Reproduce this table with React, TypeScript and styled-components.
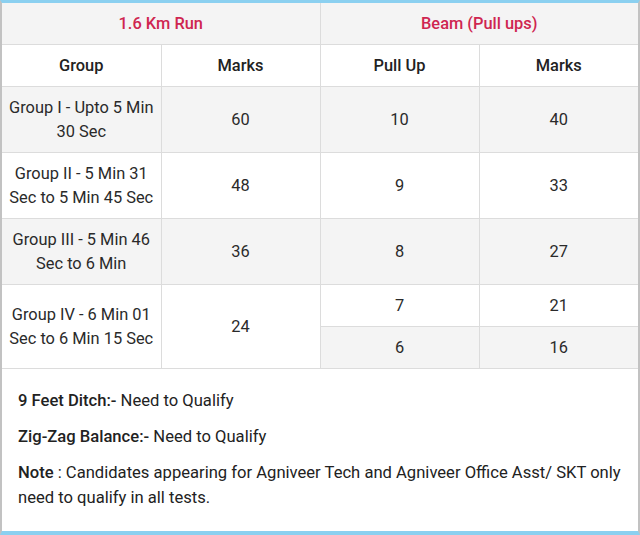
import React from "react";
import styled, { createGlobalStyle } from "styled-components";

const Global = createGlobalStyle`
  html, body { margin: 0; padding: 0; background: #fff; }
  body { font-family: Roboto, "Noto Sans", Arial, sans-serif; color: #222; }
`;

const Frame = styled.div`
  width: 640px;
  height: 535px;
  box-sizing: border-box;
  border-top: 3px solid #8bd0f0;
  border-bottom: 4px solid #8bd0f0;
  border-left: 2px solid #c2c2c2;
  border-right: 2px solid #c2c2c2;
  display: flex;
  flex-direction: column;
`;

const Table = styled.table`
  width: 100%;
  border-collapse: collapse;
  table-layout: fixed;
  font-size: 16.4px;
  line-height: 24px;
`;

const Row = styled.tr<{ $shade?: boolean }>`
  background: ${(p) => (p.$shade ? "#f4f4f4" : "#ffffff")};
`;

const Cell = styled.td<{ $shade?: boolean }>`
  border: 1px solid #dcdcdc;
  padding: 9px 4px 8px;
  text-align: center;
  vertical-align: middle;
  color: #2a2a2a;
  background: ${(p) => (p.$shade === undefined ? "transparent" : p.$shade ? "#f4f4f4" : "#ffffff")};
  &:first-child { border-left: none; }
  &:last-child { border-right: none; }
`;

const Title = styled.th`
  border: 1px solid #dcdcdc;
  border-top: none;
  padding: 9px 6px 8px;
  font-weight: 500;
  color: #cf2550;
  text-align: center;
  &:first-child { border-left: none; }
  &:last-child { border-right: none; }
`;

const Head = styled.th`
  border: 1px solid #dcdcdc;
  padding: 9px 6px 8px;
  font-weight: 500;
  color: #222;
  text-align: center;
  &:first-child { border-left: none; }
  &:last-child { border-right: none; }
`;

const Notes = styled.div`
  padding: 19px 14px 0 16px;
  font-size: 16.6px;
  line-height: 25px;
  color: #222;
`;

const Para = styled.p`
  margin: 0 0 11px 0;
`;

const Strong = styled.span`
  font-weight: 500;
`;

const rows = [
  { g: "Group I - Upto 5 Min 30 Sec", m: "60", p: "10", b: "40", shade: true },
  { g: "Group II - 5 Min 31 Sec to 5 Min 45 Sec", m: "48", p: "9", b: "33", shade: false },
  { g: "Group III - 5 Min 46 Sec to 6 Min", m: "36", p: "8", b: "27", shade: true },
];

export default function App() {
  return (
    <>
      <Global />
      <Frame>
        <Table>
          <tbody>
            <Row $shade>
              <Title colSpan={2}>1.6 Km Run</Title>
              <Title colSpan={2}>Beam (Pull ups)</Title>
            </Row>
            <Row>
              <Head>Group</Head>
              <Head>Marks</Head>
              <Head>Pull Up</Head>
              <Head>Marks</Head>
            </Row>
            {rows.map((r) => (
              <Row key={r.g} $shade={r.shade}>
                <Cell>{r.g}</Cell>
                <Cell>{r.m}</Cell>
                <Cell>{r.p}</Cell>
                <Cell>{r.b}</Cell>
              </Row>
            ))}
            <Row>
              <Cell rowSpan={2} $shade={false}>Group IV - 6 Min 01 Sec to 6 Min 15 Sec</Cell>
              <Cell rowSpan={2} $shade={false}>24</Cell>
              <Cell>7</Cell>
              <Cell>21</Cell>
            </Row>
            <Row $shade>
              <Cell>6</Cell>
              <Cell>16</Cell>
            </Row>
          </tbody>
        </Table>
        <Notes>
          <Para><Strong>9 Feet Ditch:-</Strong> Need to Qualify</Para>
          <Para><Strong>Zig-Zag Balance:-</Strong> Need to Qualify</Para>
          <Para><Strong>Note</Strong> : Candidates appearing for Agniveer Tech and Agniveer Office Asst/ SKT only need to qualify in all tests.</Para>
        </Notes>
      </Frame>
    </>
  );
}
